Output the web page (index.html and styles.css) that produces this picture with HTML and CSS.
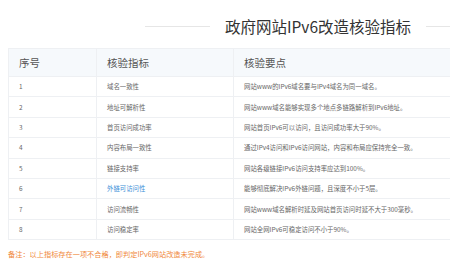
FILE: index.html
```html
<!DOCTYPE html>
<html lang="zh-CN">
<head>
<meta charset="utf-8">
<title>政府网站IPv6改造核验指标</title>
<link rel="stylesheet" href="styles.css">
</head>
<body>
<div class="page">
  <div class="title-row">
    <span class="rule rule-left"></span>
    <h1 class="title">政府网站IPv6改造核验指标</h1>
    <span class="rule rule-right"></span>
  </div>
  <table class="grid">
    <thead>
      <tr><th class="c1">序号</th><th class="c2">核验指标</th><th class="c3">核验要点</th></tr>
    </thead>
    <tbody>
      <tr><td>1</td><td>域名一致性</td><td>网站www的IPv6域名要与IPv4域名为同一域名。</td></tr>
      <tr><td>2</td><td>地址可解析性</td><td>网站www域名能够实现多个地点多链路解析到IPv6地址。</td></tr>
      <tr><td>3</td><td>首页访问成功率</td><td>网站首页IPv6可以访问，且访问成功率大于90%。</td></tr>
      <tr><td>4</td><td>内容布局一致性</td><td>通过IPv4访问和IPv6访问网站，内容和布局应保持完全一致。</td></tr>
      <tr><td>5</td><td>链接支持率</td><td>网站各级链接IPv6访问支持率应达到100%。</td></tr>
      <tr><td>6</td><td class="link">外链可访问性</td><td>能够彻底解决IPv6外链问题，且深度不小于5层。</td></tr>
      <tr><td>7</td><td>访问流畅性</td><td>网站www域名解析时延及网站首页访问时延不大于300毫秒。</td></tr>
      <tr><td>8</td><td>访问稳定率</td><td>网站全网IPv6可稳定访问不小于90%。</td></tr>
    </tbody>
  </table>
  <p class="note">备注：以上指标存在一项不合格，即判定IPv6网站改造未完成。</p>
</div>
</body>
</html>
```

FILE: styles.css
```css
html, body {
  margin: 0;
  padding: 0;
  background: #ffffff;
  overflow: hidden;
}
body {
  width: 450px;
  height: 276px;
  font-family: "Noto Sans CJK SC", "Noto Sans", sans-serif;
  color: #666;
}
.page {
  padding: 0 0 0 8px;
}
.title-row {
  display: flex;
  align-items: center;
  height: 48px;
  padding-left: 137px;
  gap: 15px;
  margin-top: 2px;
  margin-bottom: -2px;
}
.rule {
  display: block;
  height: 1px;
  background: #e6e6e6;
}
.rule-left { width: 65px; }
.rule-right { flex: 1; }
.title {
  margin: 0;
  font-size: 15.5px;
  font-weight: normal;
  color: #333;
  white-space: nowrap;
  line-height: 20px;
}
.grid {
  width: 442px;
  border-collapse: collapse;
  table-layout: fixed;
}
.grid th, .grid td {
  text-align: left;
  border: 1px solid #eef0f3;
  padding: 0 0 0 10px;
  white-space: nowrap;
  overflow: hidden;
}
.grid th:last-child, .grid td:last-child {
  border-right: none;
}
.grid th {
  height: 27px;
  background: #f6f9fc;
  font-size: 10.5px;
  font-weight: normal;
  color: #555;
}
.grid td {
  height: 19.4px;
  font-size: 6.4px;
  color: #666;
}
.c1 { width: 77px; }
.c2 { width: 126px; }
.grid td.link { color: #3d8fd8; }
.note {
  margin: 9px 0 0 0;
  font-size: 7.2px;
  color: #f0883a;
}
```
